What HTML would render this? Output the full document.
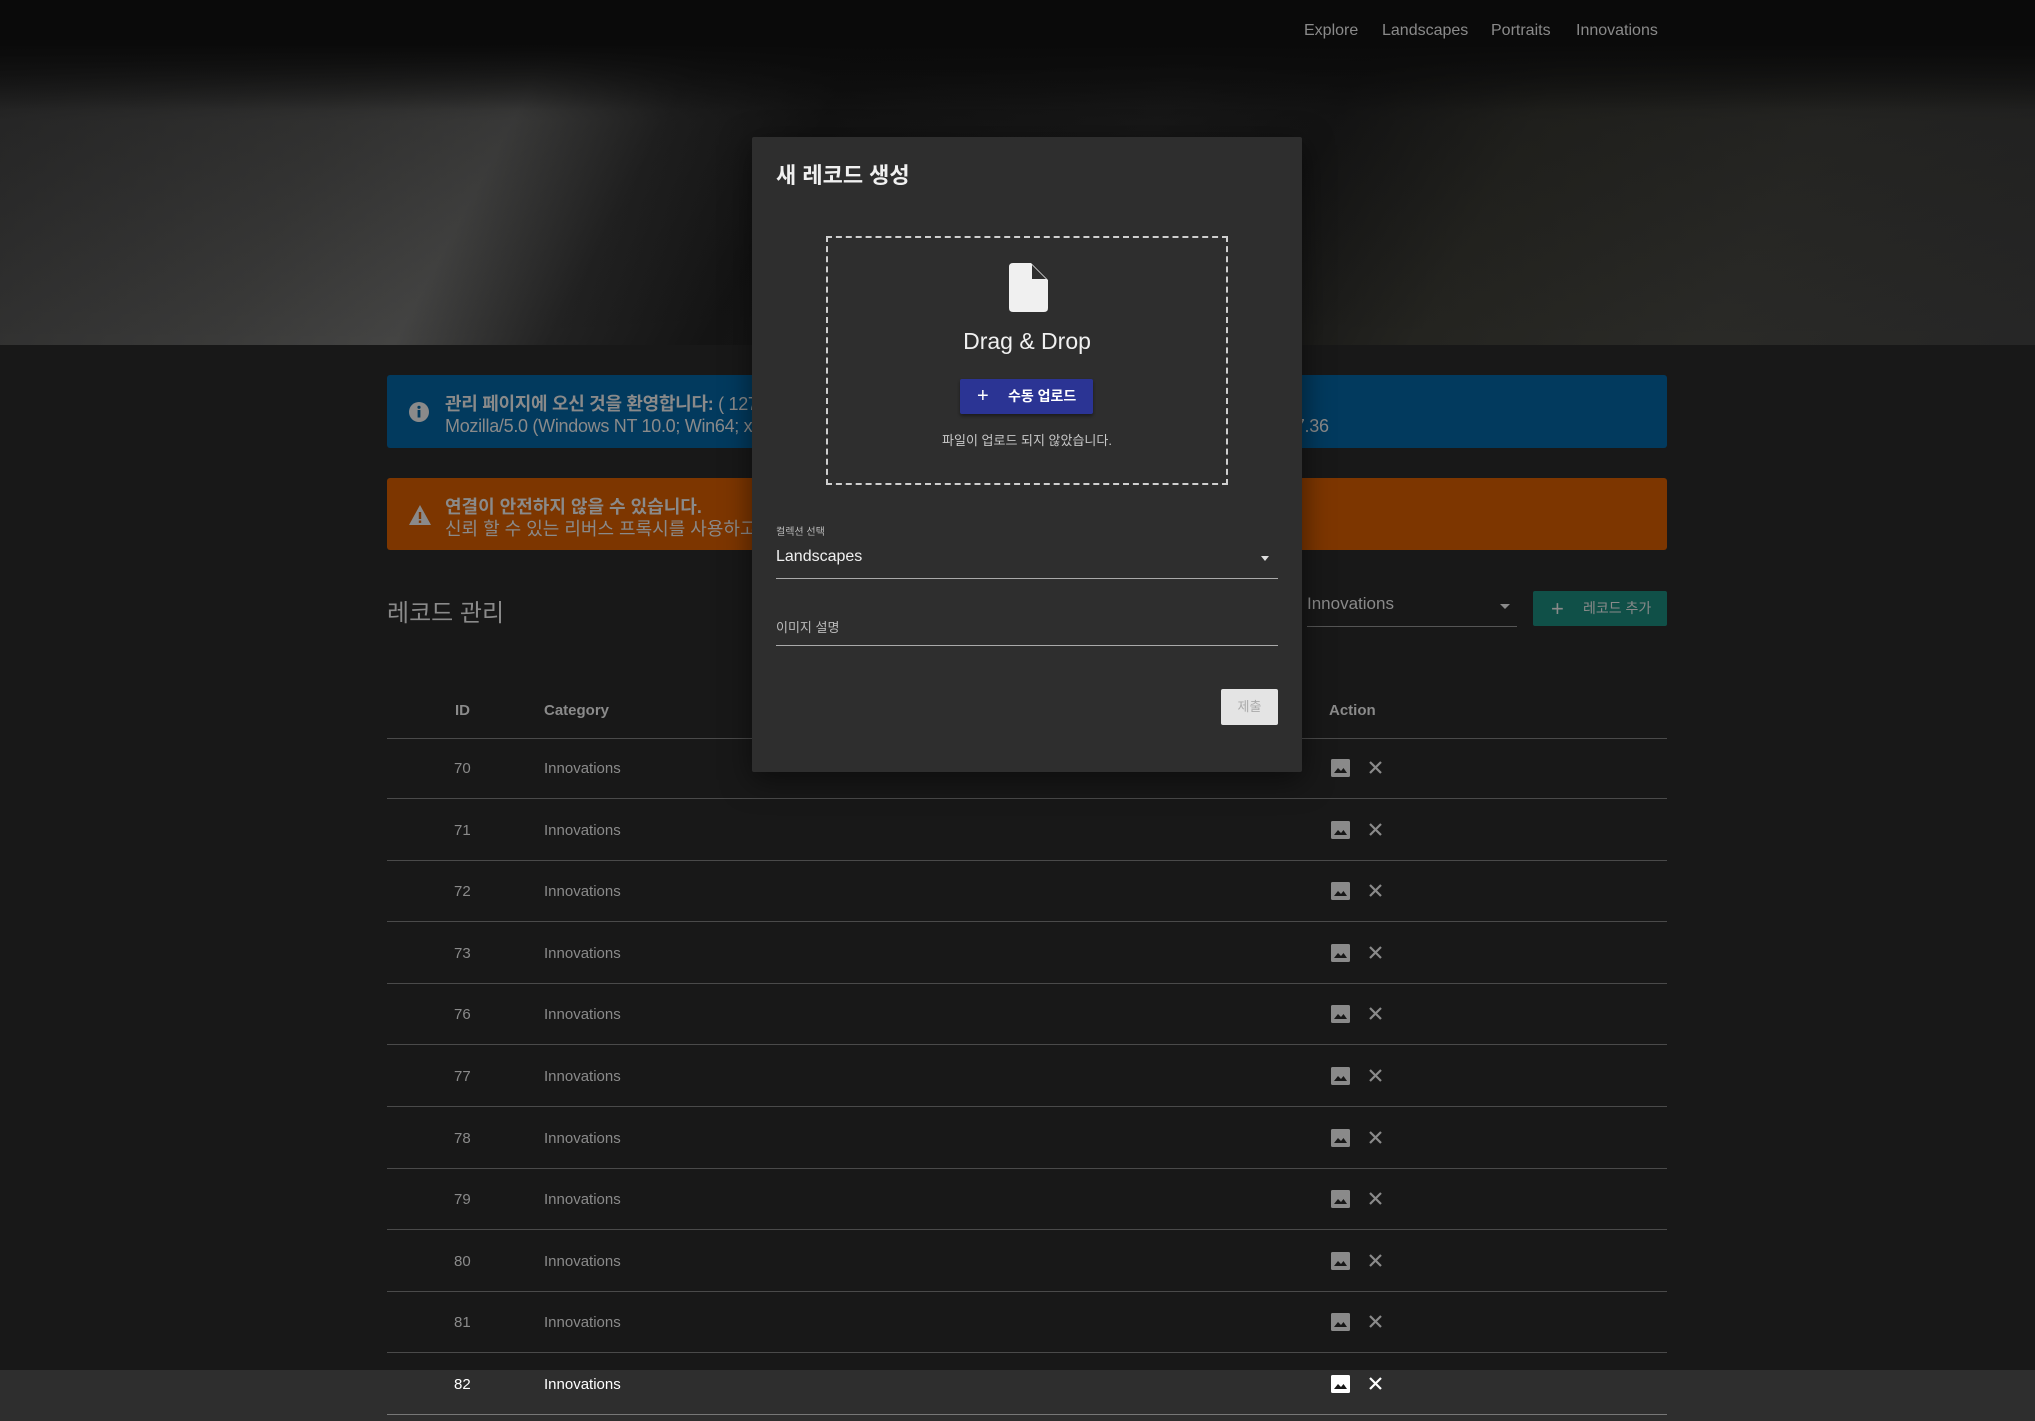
<!DOCTYPE html>
<html><head><meta charset="utf-8"><style>
*{box-sizing:border-box;margin:0;padding:0}
body{width:2035px;height:1421px;overflow:hidden;background:#181818;font-family:"Liberation Sans","Noto Sans CJK KR",sans-serif;position:relative;color:#888}
.hero{position:absolute;left:0;top:0;width:2035px;height:345px;background:
linear-gradient(180deg,#0b0b0b 0,#0b0b0b 45px,rgba(11,11,11,0) 110px),
linear-gradient(118deg,#2a2a2a 0,#3a3a39 18%,#444443 26%,#222 33%,#141414 40%,#1a1a1a 55%,#151515 63%,#242420 72%,#2a2a27 85%,#262626 100%);}
.hero:after{content:"";position:absolute;left:0;top:0;right:0;bottom:0;background:linear-gradient(180deg,rgba(10,10,10,.9) 0,rgba(10,10,10,.2) 35%,rgba(10,10,10,0) 100%)}
.nav{position:absolute;top:22px;font-size:16px;color:#8a8a8a;z-index:2}
.alert{position:absolute;left:387px;width:1280px;border-radius:3px;color:#8a8a8a;font-size:18px;line-height:22px}
.alert .ic{position:absolute;left:21px;top:27px}
.alert .t{position:absolute;left:58px;top:18px;white-space:nowrap}
.row{position:absolute;left:387px;width:1280px;height:1px;background:#4a4a4a}
.cell{position:absolute;font-size:15px;color:#8a8a8a}
.modal{position:absolute;left:752px;top:137px;width:550px;height:635px;background:#2e2e2e;border-radius:2px;z-index:5;box-shadow:0 8px 30px rgba(0,0,0,.5)}
</style></head><body>
<div class="hero"></div>
<div class="nav" style="left:1304px">Explore</div>
<div class="nav" style="left:1382px">Landscapes</div>
<div class="nav" style="left:1491px">Portraits</div>
<div class="nav" style="left:1576px">Innovations</div>

<div class="alert" style="top:375px;height:73px;background:#023a5e">
<svg class="ic" width="22" height="22" viewBox="0 0 22 22" style="top:26px"><circle cx="11" cy="11" r="10" fill="#8a8a8a"/><rect x="9.6" y="9" width="2.8" height="7.5" fill="#023a5e"/><circle cx="11" cy="6.3" r="1.6" fill="#023a5e"/></svg>
<div class="t" style="letter-spacing:-0.3px"><b>관리 페이지에 오신 것을 환영합니다:</b> ( 127.0.0.1 )<br>Mozilla/5.0 (Windows NT 10.0; Win64; x64) AppleWebKit/537.36 (KHTML, like Gecko) Chrome/120.0 Safari/537.36</div>
</div>
<div class="alert" style="top:478px;height:72px;background:#7d3600">
<svg class="ic" width="24" height="22" viewBox="0 0 24 22" style="top:26px"><path d="M12 1L23 21H1Z" fill="#8a8a8a"/><rect x="10.8" y="8" width="2.4" height="7" fill="#7d3600"/><rect x="10.8" y="16.5" width="2.4" height="2.4" fill="#7d3600"/></svg>
<div class="t"><b>연결이 안전하지 않을 수 있습니다.</b><br>신뢰 할 수 있는 리버스 프록시를 사용하고 있는지 확인하세요.</div>
</div>

<div style="position:absolute;left:387px;top:593px;font-size:24px;color:#8a8a8a">레코드 관리</div>
<div style="position:absolute;left:1307px;top:594px;font-size:17px;color:#8a8a8a">Innovations</div>
<div style="position:absolute;left:1500px;top:604px;width:0;height:0;border-left:5px solid transparent;border-right:5px solid transparent;border-top:5px solid #8a8a8a"></div>
<div style="position:absolute;left:1307px;top:626px;width:210px;height:1px;background:#555"></div>
<div style="position:absolute;left:1533px;top:591px;width:134px;height:35px;background:#105048;border-radius:2px;color:#8a8a8a;font-size:14px;line-height:35px"><span style="position:absolute;left:18px;font-size:22px">+</span><span style="position:absolute;left:50px">레코드 추가</span></div>

<div class="cell" style="left:455px;top:702px;font-weight:bold">ID</div>
<div class="cell" style="left:544px;top:702px;font-weight:bold">Category</div>
<div class="cell" style="left:1329px;top:702px;font-weight:bold">Action</div>
<div class="row" style="top:738px"></div>

<div style="position:absolute;left:0;top:1370px;width:2035px;height:51px;background:#2e2e2e"></div>
<div id="rows"></div>
<script>
var ids=[70,71,72,73,76,77,78,79,80,81,82],h='';
ids.forEach(function(id,i){var y=768+i*61.6;var last=i==10;var c=last?'#fff':'#8a8a8a';
h+='<div class="cell" style="left:454px;top:'+(y-8)+'px;color:'+c+'">'+id+'</div>';
h+='<div class="cell" style="left:544px;top:'+(y-8)+'px;color:'+c+'">Innovations</div>';
h+='<svg style="position:absolute;left:1331px;top:'+(y-9)+'px" width="19" height="18" viewBox="0 0 19 18"><rect x="0" y="0" width="19" height="18" rx="1.5" fill="'+c+'"/><path d="M3 14L7 9 10 12 12.5 9 16 14Z" fill="#181818"/></svg>';
h+='<svg style="position:absolute;left:1368px;top:'+(y-8)+'px" width="15" height="15" viewBox="0 0 15 15"><path d="M2 2L13 13M13 2L2 13" stroke="'+c+'" stroke-width="2.2"/></svg>';
h+='<div class="row" style="top:'+Math.round(y+30)+'px;background:'+(last?'#777':'#4a4a4a')+'"></div>';});
document.getElementById('rows').innerHTML=h;
</script>

<div class="modal">
<div style="position:absolute;left:24px;top:21px;font-size:22px;color:#f0f0f0;font-weight:bold">새 레코드 생성</div>
<div style="position:absolute;left:74px;top:99px;width:402px;height:249px;border:2px dashed #cfcfcf"></div>
<svg style="position:absolute;left:257px;top:126px" width="39" height="49" viewBox="0 0 39 49"><path d="M4 0H22L39 17V45Q39 49 35 49H4Q0 49 0 45V4Q0 0 4 0Z" fill="#f0f0f0"/><path d="M23 2L37 16H23Z" fill="#2e2e2e"/></svg>
<div style="position:absolute;left:0;width:550px;text-align:center;top:191px;font-size:23px;color:#f0f0f0">Drag &amp; Drop</div>
<div style="position:absolute;left:208px;top:242px;width:133px;height:35px;background:#2b3494;border-radius:2px;color:#fff;font-size:14px;line-height:35px;font-weight:bold;box-shadow:0 2px 3px rgba(0,0,0,.4)"><span style="position:absolute;left:17px;font-size:20px;font-weight:normal">+</span><span style="position:absolute;left:48px">수동 업로드</span></div>
<div style="position:absolute;left:0;width:550px;text-align:center;top:293px;font-size:13px;color:#c8c8c8">파일이 업로드 되지 않았습니다.</div>
<div style="position:absolute;left:24px;top:386px;font-size:10px;color:#bbb">컬렉션 선택</div>
<div style="position:absolute;left:24px;top:411px;font-size:16px;color:#f0f0f0">Landscapes</div>
<div style="position:absolute;left:509px;top:419px;width:0;height:0;border-left:4px solid transparent;border-right:4px solid transparent;border-top:5px solid #ddd"></div>
<div style="position:absolute;left:24px;top:441px;width:502px;height:1px;background:#aaa"></div>
<div style="position:absolute;left:24px;top:480px;font-size:13px;color:#bbb">이미지 설명</div>
<div style="position:absolute;left:24px;top:508px;width:502px;height:1px;background:#aaa"></div>
<div style="position:absolute;left:469px;top:552px;width:57px;height:36px;background:#e4e4e4;border-radius:2px;color:#aaa;font-size:13px;line-height:36px;text-align:center">제출</div>
</div>
</body></html>
